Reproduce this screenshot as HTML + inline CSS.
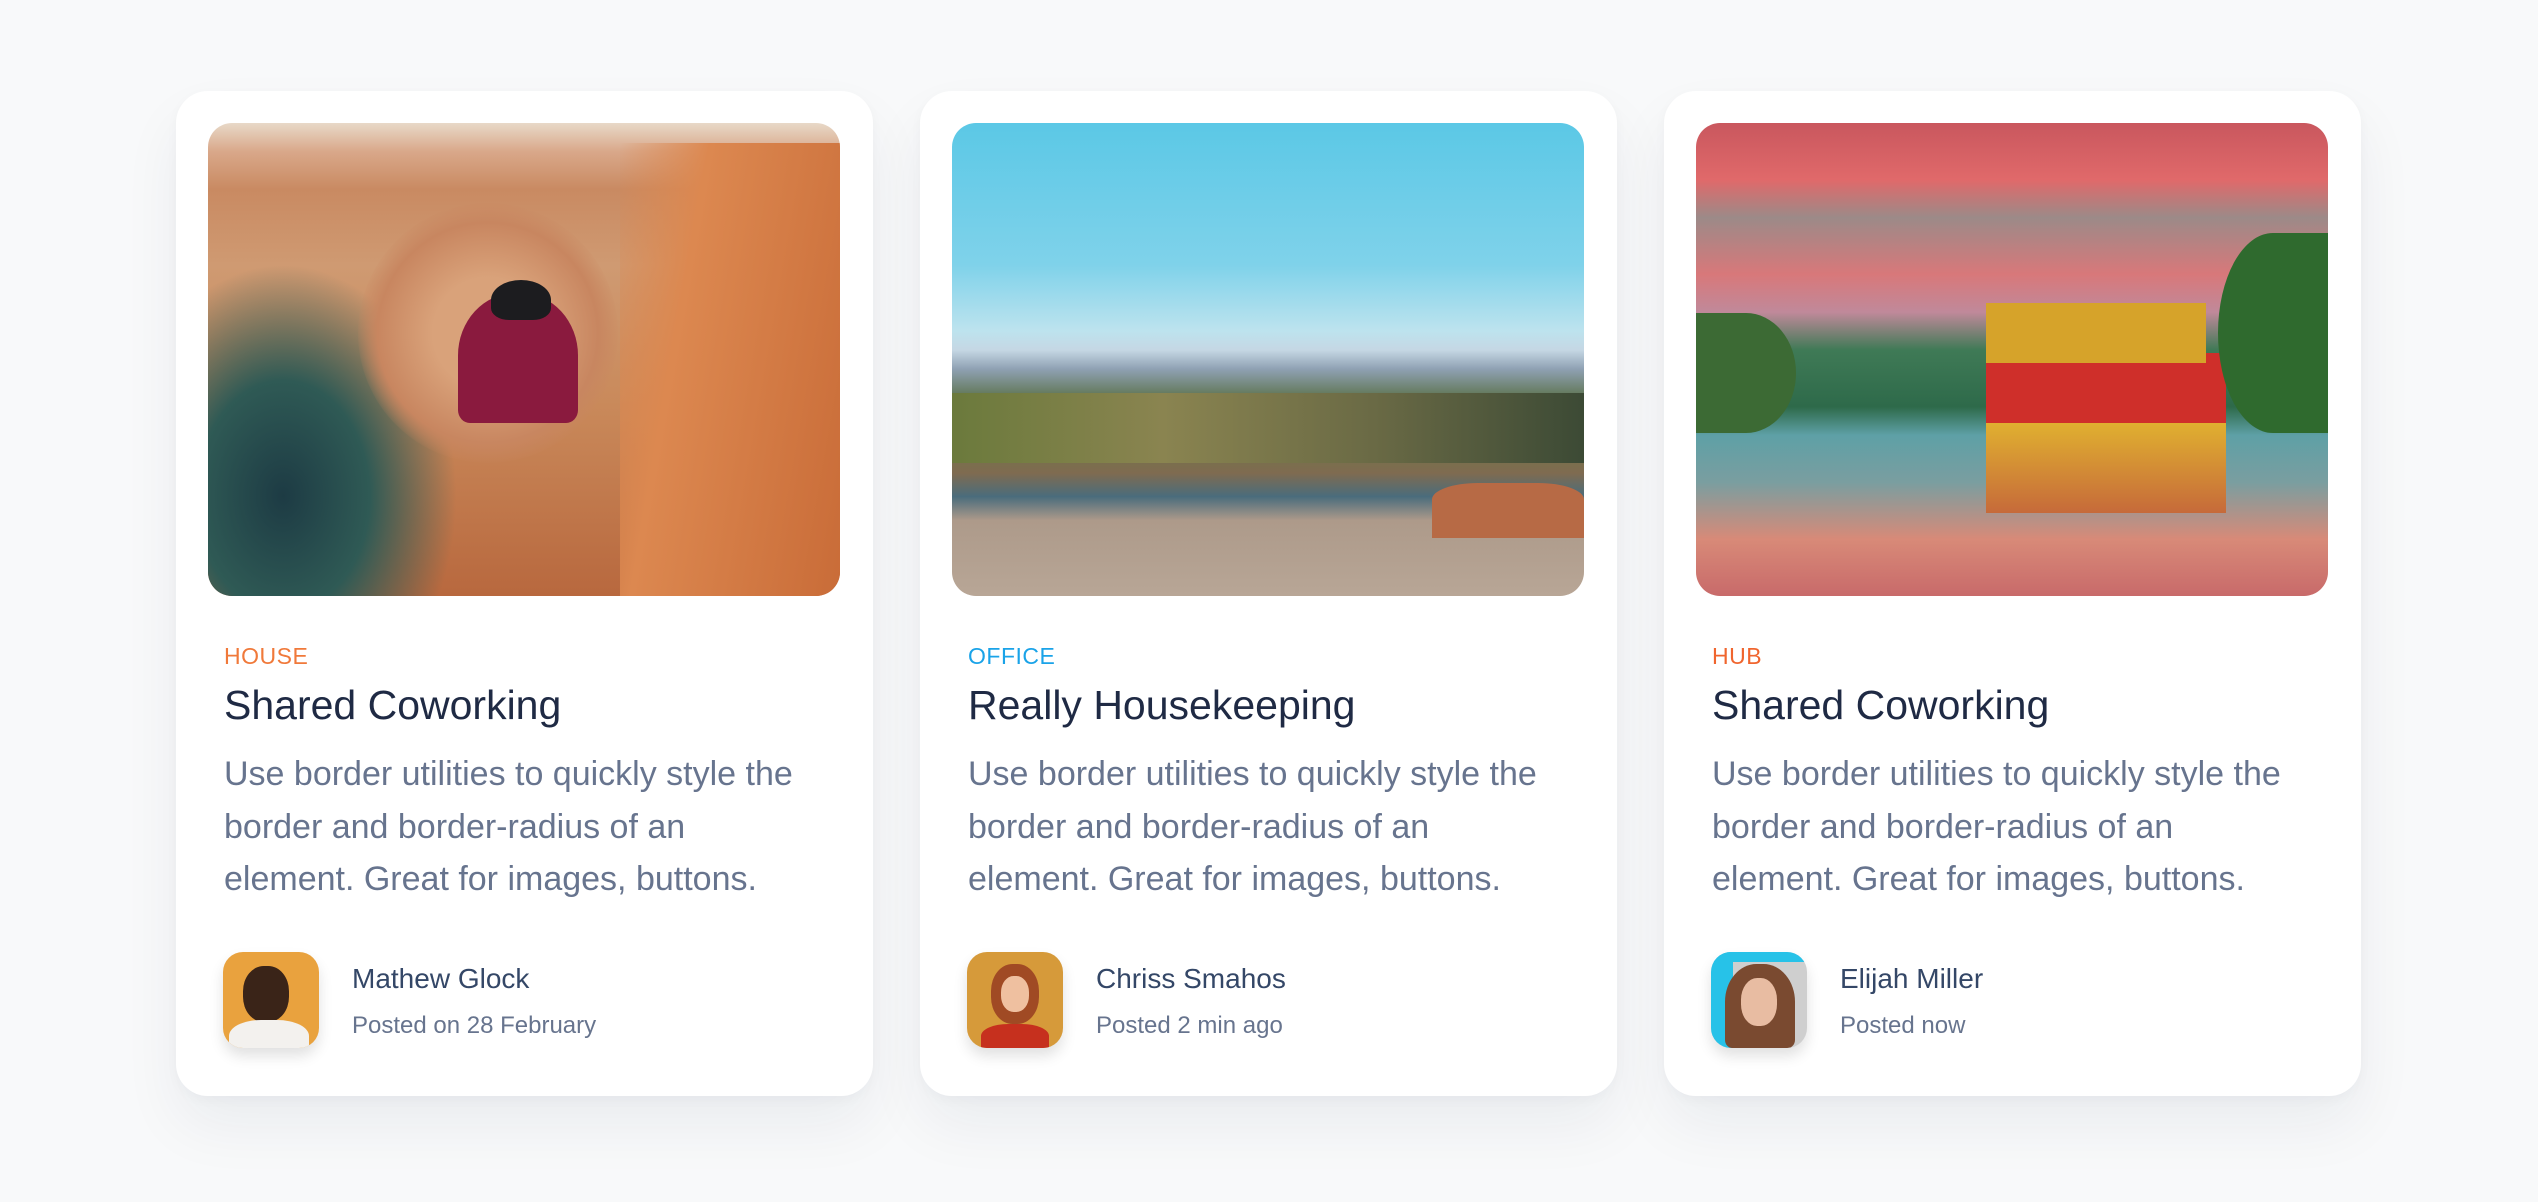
<!DOCTYPE html>
<html><head><meta charset="utf-8"><style>
*{box-sizing:border-box;margin:0;padding:0}
body{width:2538px;height:1202px;background:#f8f9fa;font-family:"Liberation Sans","DejaVu Sans",sans-serif;overflow:hidden;position:relative}
.card{position:absolute;top:91px;width:697px;height:1005px;background:#fff;border-radius:32px;box-shadow:0 30px 60px rgba(20,30,60,.06),0 4px 12px rgba(20,30,60,.03)}
.img{position:absolute;left:32px;top:32px;width:632px;height:473px;border-radius:24px;overflow:hidden}
.cat{position:absolute;left:48px;top:552px;font-size:23px;letter-spacing:.5px}
.title{position:absolute;left:48px;top:590px;font-size:41px;color:#1f2a44;line-height:48px}
.body{position:absolute;left:48px;top:657px;width:585px;font-size:34px;line-height:52.5px;color:#67748e}
.av{position:absolute;left:47px;top:861px;width:96px;height:96px;border-radius:20px;overflow:hidden;box-shadow:0 8px 14px rgba(0,0,0,.12)}
.name{position:absolute;left:176px;top:872px;font-size:28px;color:#344767}
.sub{position:absolute;left:176px;top:921px;font-size:24px;color:#67748e}
</style></head><body>

<div class="card" style="left:176px">
 <div class="img" style="background:linear-gradient(180deg,#e8d9c8 0%,#d9a88a 6%,#c98a62 14%,#cf9a72 30%,#c9895a 60%,#b8683e 100%)">
  <div style="position:absolute;left:0;top:140px;width:250px;height:333px;background:radial-gradient(ellipse at 30% 70%,#1d3b44 0%,#2f5a55 35%,transparent 70%)"></div>
  <div style="position:absolute;left:150px;top:80px;width:260px;height:260px;border-radius:50%;background:radial-gradient(circle,#d9a27a 30%,#c88660 60%,transparent 72%)"></div>
  <div style="position:absolute;right:0;top:20px;width:220px;height:453px;background:linear-gradient(100deg,transparent 0%,#dc8850 30%,#c96c38 100%)"></div>
  <div style="position:absolute;left:250px;top:170px;width:120px;height:130px;border-radius:48% 48% 10% 10%;background:#8a1a3e"></div>
  <div style="position:absolute;left:283px;top:157px;width:60px;height:40px;border-radius:50% 50% 30% 30%;background:#1c1c1f"></div>
 </div>
 <div class="cat" style="color:#f0793a">HOUSE</div>
 <div class="title">Shared Coworking</div>
 <div class="body">Use border utilities to quickly style the border and border-radius of an element. Great for images, buttons.</div>
 <div class="av" style="background:#e9a23e"><div style="position:absolute;left:20px;top:14px;width:46px;height:56px;border-radius:45%;background:#3a2418"></div><div style="position:absolute;left:6px;top:68px;width:80px;height:40px;border-radius:40% 40% 0 0;background:#f3f1ee"></div></div>
 <div class="name">Mathew Glock</div>
 <div class="sub">Posted on 28 February</div>
</div>

<div class="card" style="left:920px">
 <div class="img" style="background:linear-gradient(180deg,#5bc8e6 0%,#7fd2ea 30%,#bde3ee 44%,#c5d7e4 48%,#8fa1b3 52%,#5f7552 58%,#6d7846 66%,#7f6b50 74%,#4a6c7c 79%,#ad9a8a 84%,#b8a696 100%)">
  <div style="position:absolute;left:0;top:270px;width:632px;height:70px;background:linear-gradient(90deg,#6b7a3c,#8a8450,#6a6a45,#3c4a35)"></div>
  <div style="position:absolute;left:480px;top:360px;width:152px;height:55px;border-radius:30% 30% 0 0;background:#b76a45"></div>
 </div>
 <div class="cat" style="color:#1aa3e8">OFFICE</div>
 <div class="title">Really Housekeeping</div>
 <div class="body">Use border utilities to quickly style the border and border-radius of an element. Great for images, buttons.</div>
 <div class="av" style="background:#d69a3a"><div style="position:absolute;left:24px;top:12px;width:48px;height:60px;border-radius:45%;background:#a04a24"></div><div style="position:absolute;left:34px;top:24px;width:28px;height:36px;border-radius:45%;background:#efc0a0"></div><div style="position:absolute;left:14px;top:72px;width:68px;height:30px;border-radius:40% 40% 0 0;background:#c6301e"></div></div>
 <div class="name">Chriss Smahos</div>
 <div class="sub">Posted 2 min ago</div>
</div>

<div class="card" style="left:1664px">
 <div class="img" style="background:linear-gradient(180deg,#c9575e 0%,#e0696a 12%,#9c8a88 20%,#d8787a 32%,#c0899a 40%,#3f7a56 48%,#2e6a4a 60%,#5ea0a6 66%,#7a9ea0 76%,#d88a78 88%,#c86a6a 100%)">
  <div style="position:absolute;left:290px;top:230px;width:240px;height:70px;background:#cf2f2a"></div>
  <div style="position:absolute;left:290px;top:180px;width:220px;height:60px;background:#d6a32a"></div>
  <div style="position:absolute;left:290px;top:300px;width:240px;height:90px;background:linear-gradient(180deg,#e0b030,#c66a3a)"></div>
  <div style="position:absolute;right:0;top:110px;width:110px;height:200px;border-radius:50% 0 0 50%;background:#2f6a2e"></div>
  <div style="position:absolute;left:0;top:190px;width:100px;height:120px;border-radius:0 50% 50% 0;background:#3c6a34"></div>
 </div>
 <div class="cat" style="color:#f0652e">HUB</div>
 <div class="title">Shared Coworking</div>
 <div class="body">Use border utilities to quickly style the border and border-radius of an element. Great for images, buttons.</div>
 <div class="av" style="background:#cfcfcf"><div style="position:absolute;left:0;top:0;width:22px;height:96px;background:#27c2e8"></div><div style="position:absolute;left:0;top:0;width:96px;height:10px;background:#27c2e8"></div><div style="position:absolute;left:14px;top:12px;width:70px;height:84px;border-radius:45% 45% 10% 10%;background:#7a4a30"></div><div style="position:absolute;left:30px;top:26px;width:36px;height:48px;border-radius:45%;background:#e8bca2"></div></div>
 <div class="name">Elijah Miller</div>
 <div class="sub">Posted now</div>
</div>

</body></html>
